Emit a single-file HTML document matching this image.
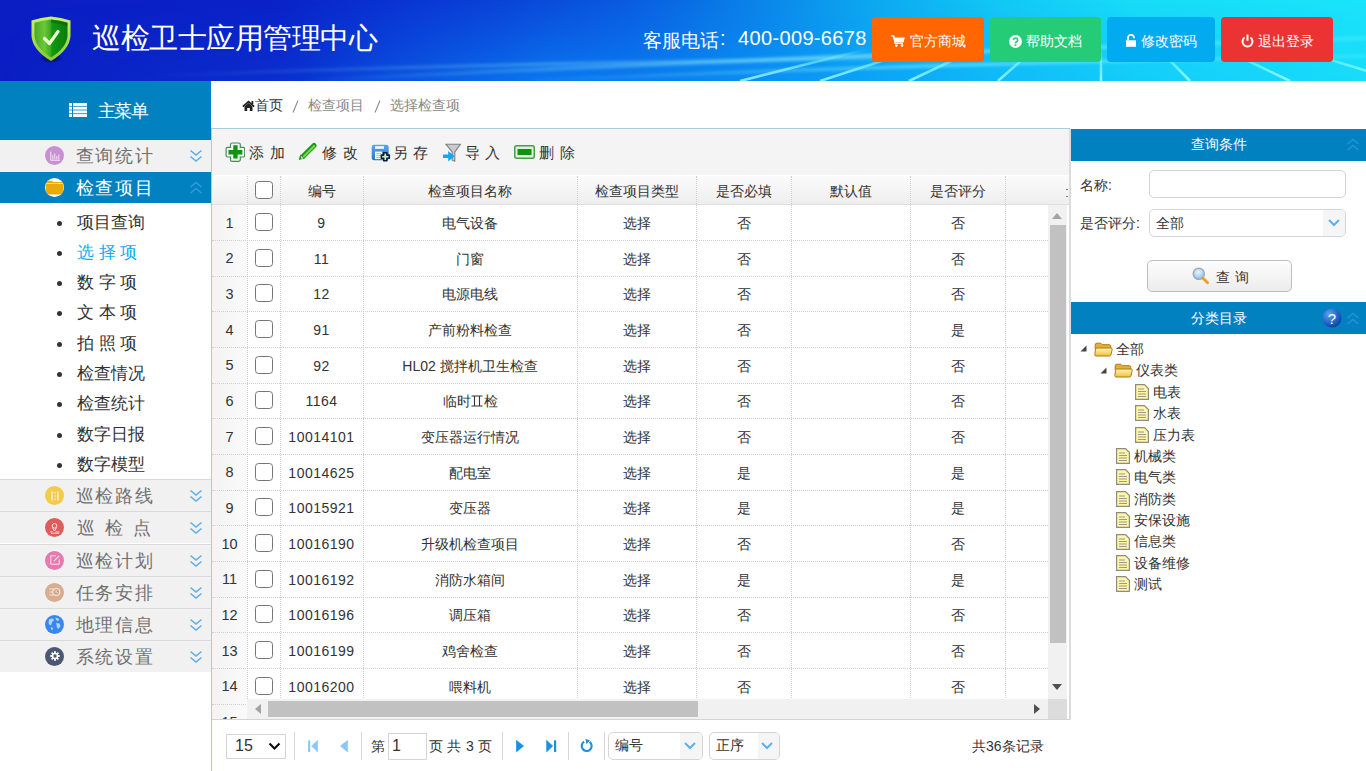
<!DOCTYPE html>
<html><head><meta charset="utf-8">
<style>
*{box-sizing:border-box;margin:0;padding:0}
html,body{width:1366px;height:771px;overflow:hidden;background:#fff;font-family:"Liberation Sans",sans-serif;color:#333}
.a{position:absolute}
.hdr{left:0;top:0;width:1366px;height:81px;background:linear-gradient(90deg,#0b1ec4 0%,#0a22c8 20%,#0a32d2 28%,#0a44d8 37%,#0a5ce0 46%,#0a7ee8 54%,#0ca6f0 63%,#12c8f5 73%,#17dcf8 83%,#1ae4fa 100%);overflow:hidden}
.title{left:92px;top:18.5px;font-size:29px;letter-spacing:-0.5px;color:#fff;white-space:nowrap}
.phone{left:642px;top:27px;font-size:20px;color:#fff;white-space:nowrap}
.btn{top:17px;height:45px;border-radius:4px;color:#fff;font-size:14px;line-height:48px;text-align:center;white-space:nowrap}
.side{left:0;top:81px;width:211px;height:690px;background:#fff}
.mtop{left:0;top:81px;width:211px;height:59px;background:#0281c1;color:#fff;font-size:18px}
.grp{left:0;width:211px;height:32px;background:#f1f1f1;font-size:18px;letter-spacing:1.6px;color:#707070}
.grp .t{position:absolute;left:75.8px;top:4px;white-space:nowrap}
.grp .ic{position:absolute;left:45px;top:6px;width:19px;height:19px;border-radius:50%}
.grp .chev{position:absolute;left:189px;top:9px}
.sub{left:0;width:211px;height:30px;font-size:16.5px;color:#333}
.sub .t{position:absolute;left:77.3px;top:6px;white-space:nowrap}
.sub .dot{position:absolute;left:57px;top:15px;width:5px;height:5px;border-radius:50%;background:#333}
.crumb{left:211px;top:81px;width:1155px;height:47px;background:#fff;font-size:14px}
.grid{left:211px;top:128px;width:859px;height:592px;border:1px solid #a9cde0;background:#fff;overflow:hidden}
.tb{left:212px;top:129px;width:857px;height:47px;background:#f4f4f4;border-bottom:1px solid #e2e2e2}
.tbi{top:0;height:46px;line-height:48px;font-size:15px;color:#333;white-space:nowrap;letter-spacing:5.5px}
.gh{top:176px;height:28.5px;background:linear-gradient(#fbfbfb,#eeeeee);border-bottom:1px solid #e0e0e0}
.cell{position:absolute;text-align:center;font-size:14px;white-space:nowrap;overflow:hidden}
.vl{position:absolute;width:0;border-left:1px dotted #cfcfcf}
.hl{position:absolute;height:0;border-top:1px dotted #cfcfcf}
.cb{position:absolute;width:18px;height:18px;border:1.8px solid #767676;border-radius:3.5px;background:#fff}
.rp{left:1071px;top:129px;width:295px;height:642px;background:#fff}
.ph{left:1071px;width:295px;height:31.5px;background:#0281c1;color:#fff;font-size:14px;text-align:center;line-height:31px}
.inp{position:absolute;border:1px solid #d5d5d5;border-radius:5px;background:#fff}
.tree{font-size:14px;color:#333;white-space:nowrap}
.pg{font-size:14px;color:#333;white-space:nowrap}
.sep{position:absolute;top:732px;width:1px;height:28px;background:#d6d6d6}
</style></head><body>

<div class="a hdr">
<svg class="a" style="left:0;top:0" width="1366" height="81" viewBox="0 0 1366 81">
<defs>
<linearGradient id="gl" x1="0" y1="0" x2="1" y2="0"><stop offset="0" stop-color="#9ff" stop-opacity="0"/><stop offset="0.5" stop-color="#aff" stop-opacity="0.5"/><stop offset="1" stop-color="#9ff" stop-opacity="0.2"/></linearGradient>
<linearGradient id="gv" x1="0" y1="0" x2="0" y2="1"><stop offset="0" stop-color="#0a8cff" stop-opacity="0"/><stop offset="1" stop-color="#0a9cff" stop-opacity="0.55"/></linearGradient>
<linearGradient id="gb" x1="0" y1="0" x2="1" y2="0"><stop offset="0" stop-color="#fff" stop-opacity="0"/><stop offset="0.22" stop-color="#fff" stop-opacity="0.2"/><stop offset="0.4" stop-color="#fff" stop-opacity="1"/><stop offset="0.7" stop-color="#fff" stop-opacity="0.6"/><stop offset="1" stop-color="#fff" stop-opacity="0.2"/></linearGradient>
<mask id="mk"><rect x="0" y="0" width="1366" height="81" fill="url(#gb)"/></mask>
<filter id="bl" x="-5%" y="-50%" width="110%" height="200%"><feGaussianBlur stdDeviation="1.5"/></filter>
</defs>
<rect x="0" y="0" width="1366" height="81" fill="url(#gv)" mask="url(#mk)"/>
<g filter="url(#bl)">
<path d="M300 81 Q700 60 1366 38" stroke="url(#gl)" stroke-width="4" fill="none"/>
<path d="M520 81 Q900 64 1366 56" stroke="url(#gl)" stroke-width="3" fill="none"/>
<path d="M150 76 Q500 62 950 58" stroke="url(#gl)" stroke-width="3" fill="none" opacity="0.6"/>
</g>
<linearGradient id="lg2" x1="0" y1="48" x2="0" y2="81" gradientUnits="userSpaceOnUse"><stop offset="0" stop-color="#7ff" stop-opacity="0"/><stop offset="0.5" stop-color="#8ff" stop-opacity="0.6"/><stop offset="1" stop-color="#aff" stop-opacity="0.8"/></linearGradient><g stroke="url(#lg2)" stroke-width="2.6"><line x1="870.9" y1="48" x2="740" y2="81"/><line x1="921.9" y1="48" x2="820" y2="81"/><line x1="978.6" y1="48" x2="909" y2="81"/><line x1="1035.4" y1="48" x2="998" y2="81"/><line x1="1101.0" y1="48" x2="1101" y2="81"/><line x1="1157.7" y1="48" x2="1190" y2="81"/><line x1="1221.5" y1="48" x2="1290" y2="81"/><line x1="1291.6" y1="48" x2="1400" y2="81"/><line x1="1368.1" y1="48" x2="1520" y2="81"/></g>
</svg>
<svg class="a" style="left:29px;top:14px" width="44" height="50" viewBox="0 0 44 50">
<defs>
<linearGradient id="rim" x1="0" y1="0" x2="0" y2="1"><stop offset="0" stop-color="#c8f070"/><stop offset="1" stop-color="#8ccc30"/></linearGradient>
<linearGradient id="shl" x1="0" y1="0" x2="1" y2="0"><stop offset="0" stop-color="#4aa82a"/><stop offset="0.3" stop-color="#6cc838"/><stop offset="0.5" stop-color="#3aa820"/><stop offset="0.52" stop-color="#129a12"/><stop offset="1" stop-color="#0a7a0e"/></linearGradient>
<radialGradient id="shd" cx="0.5" cy="0.5" r="0.5"><stop offset="0.6" stop-color="#000" stop-opacity="0.35"/><stop offset="1" stop-color="#000" stop-opacity="0"/></radialGradient>
</defs>
<ellipse cx="22" cy="44" rx="12" ry="5" fill="url(#shd)"/>
<path d="M22 2.5 Q12 3.5 2.5 6.5 L2.5 22 Q3.5 36 22 47 Q40.5 36 41.5 22 L41.5 6.5 Q32 3.5 22 2.5Z" fill="url(#rim)"/>
<path d="M22 5.5 Q13 6.5 5.5 8.8 L5.5 22 Q6.5 34 22 43.5 Q37.5 34 38.5 22 L38.5 8.8 Q31 6.5 22 5.5Z" fill="url(#shl)"/>
<path d="M22 5.5 Q31 6.5 38.5 8.8 L38.5 12 Q30 9 22 8.5Z" fill="#0a5a0a" fill-opacity="0.5"/>
<path d="M15.5 24.5 L20.5 29.5 L29 17.5" stroke="#eaffd0" stroke-width="3.2" fill="none" stroke-linecap="round" stroke-linejoin="round"/>
</svg>
<div class="a title">巡检卫士应用管理中心</div>
<div class="a phone" style="font-size:19px;left:642.5px;top:28px">客服电话</div><div class="a phone" style="left:720px;top:27px">:</div><div class="a phone" style="left:738px;top:27px;letter-spacing:0.35px">400-009-6678</div>
<div class="a btn" style="left:872px;width:112px;background:#ff6600"><svg width="14" height="12" viewBox="0 0 14 12" style="vertical-align:-1px;margin-right:5px"><path d="M0.3 1 H2.6 L4.3 8.2 H12" fill="none" stroke="#fff" stroke-width="1.6"/><path d="M3.2 2.6 H13.8 L12.6 7.3 H4.3Z" fill="#fff"/><circle cx="5.3" cy="10.6" r="1.3" fill="#fff"/><circle cx="11" cy="10.6" r="1.3" fill="#fff"/></svg>官方商城</div>
<div class="a btn" style="left:990px;width:111px;background:#25cc78"><svg width="13" height="13" viewBox="0 0 13 13" style="vertical-align:-1.5px;margin-right:4px"><circle cx="6.5" cy="6.5" r="6.5" fill="#fff"/><path d="M4.4 5.1a2.1 2.1 0 1 1 3 1.9c-.7.35-.9.7-.9 1.3v.3" fill="none" stroke="#26cc78" stroke-width="1.7"/><rect x="5.6" y="9.3" width="1.8" height="1.7" fill="#26cc78"/></svg>帮助文档</div>
<div class="a btn" style="left:1107px;width:108px;background:#02aaf0"><svg width="10" height="13" viewBox="0 0 10 13" style="vertical-align:-1px;margin-right:5px"><path d="M2 6.5 V3.8 A3 3 0 0 1 8 3.8 V4.2" fill="none" stroke="#fff" stroke-width="1.7"/><rect x="0" y="6.3" width="10" height="6.5" fill="#fff"/></svg>修改密码</div>
<div class="a btn" style="left:1221px;width:112px;background:#ec3333"><svg width="13" height="14" viewBox="0 0 13 14" style="vertical-align:-1.5px;margin-right:4px"><path d="M3.6 3.5 A5 5 0 1 0 9.4 3.5" fill="none" stroke="#fff" stroke-width="2"/><line x1="6.5" y1="0.5" x2="6.5" y2="6.8" stroke="#fff" stroke-width="2"/></svg>退出登录</div>
</div>
<div class="a side"></div>
<div class="a mtop"><svg class="a" style="left:69px;top:22px" width="18" height="14" viewBox="0 0 18 14"><g fill="#fff"><rect x="0" y="0" width="3" height="2.9"/><rect x="4" y="0" width="14" height="2.9"/><rect x="0" y="3.7" width="3" height="2.9"/><rect x="4" y="3.7" width="14" height="2.9"/><rect x="0" y="7.4" width="3" height="2.9"/><rect x="4" y="7.4" width="14" height="2.9"/><rect x="0" y="11.1" width="3" height="2.9"/><rect x="4" y="11.1" width="14" height="2.9"/></g></svg><div class="a" style="left:97.5px;top:18px;font-size:18px;letter-spacing:-1.5px;white-space:nowrap">主菜单</div></div>
<div class="a grp" style="top:140px;height:31.5px"><div class="ic" style="background:#c98fd3"><svg class="a" style="left:4.5px;top:4.5px;opacity:0.85" width="10" height="10" viewBox="0 0 10 10"><path d="M0.8 0.5v8.8h9M2.8 8.5V4M4.8 8.5V2.5M6.8 8.5V5M8.8 8.5V3.5" fill="none" stroke="#fff" stroke-width="0.9"/></svg></div><div class="t">查询统计</div><svg class="chev" width="14" height="14" viewBox="0 0 14 14"><path d="M1.5 1.5 L7 6 L12.5 1.5 M1.5 7.5 L7 12 L12.5 7.5" fill="none" stroke="#5aaee9" stroke-width="1.5"/></svg></div>
<div class="a grp" style="top:171.5px;height:31.5px;background:#0281c1;color:#fff"><div class="ic" style="background:#fff;overflow:hidden"><svg class="a" style="left:0;top:0" width="19" height="19" viewBox="0 0 19 19"><path d="M1 4 Q1 2.8 2.5 2.8 L7 2.8 L8.2 4 L17.5 4 Q18.5 4 18.5 5 L18.5 16.5 L1 16.5Z" fill="#eaaa0c"/><rect x="1.5" y="5" width="16.5" height="1" fill="#fff" fill-opacity="0.6"/></svg></div><div class="t">检查项目</div><svg class="chev" width="14" height="14" viewBox="0 0 14 14"><path d="M1.5 6 L7 1.5 L12.5 6 M1.5 12 L7 7.5 L12.5 12" fill="none" stroke="#2f9ce0" stroke-width="1.5"/></svg></div>
<div class="a sub" style="top:205.60px;color:#333"><div class="dot"></div><div class="t">项目查询</div></div>
<div class="a sub" style="top:235.88px;color:#12abee"><div class="dot"></div><div class="t">选 择 项</div></div>
<div class="a sub" style="top:266.16px;color:#333"><div class="dot"></div><div class="t">数 字 项</div></div>
<div class="a sub" style="top:296.44px;color:#333"><div class="dot"></div><div class="t">文 本 项</div></div>
<div class="a sub" style="top:326.72px;color:#333"><div class="dot"></div><div class="t">拍 照 项</div></div>
<div class="a sub" style="top:357.00px;color:#333"><div class="dot"></div><div class="t">检查情况</div></div>
<div class="a sub" style="top:387.28px;color:#333"><div class="dot"></div><div class="t">检查统计</div></div>
<div class="a sub" style="top:417.56px;color:#333"><div class="dot"></div><div class="t">数字日报</div></div>
<div class="a sub" style="top:447.84px;color:#333"><div class="dot"></div><div class="t">数字模型</div></div>
<div class="a grp" style="top:479.40px;border-top:1px solid #d9d9d9"><div class="ic" style="background:#f5c94a"><svg class="a" style="left:5.5px;top:4.5px;opacity:0.85" width="8" height="10" viewBox="0 0 8 10"><path d="M1 0.5v9M7 0.5v9" stroke="#fff" stroke-width="1.3"/><path d="M4 1v1.4M4 4.3v1.4M4 7.6v1.4" stroke="#fff" stroke-width="1.2"/></svg></div><div class="t">巡检路线</div><svg class="chev" width="14" height="14" viewBox="0 0 14 14"><path d="M1.5 1.5 L7 6 L12.5 1.5 M1.5 7.5 L7 12 L12.5 7.5" fill="none" stroke="#5aaee9" stroke-width="1.5"/></svg></div>
<div class="a grp" style="top:511.45px;border-top:1px solid #d9d9d9"><div class="ic" style="background:#dd5c5c"><svg class="a" style="left:4px;top:3.5px;opacity:0.8" width="11" height="12" viewBox="0 0 11 12"><circle cx="5.5" cy="3.8" r="2.3" fill="none" stroke="#fff" stroke-width="1"/><path d="M5.5 9 L3.4 5.5 M5.5 9 L7.6 5.5" stroke="#fff" stroke-width="1"/><path d="M1 9.8h2.5M6.5 10h4M2 11.2h8" stroke="#fff" stroke-width="0.9"/></svg></div><div class="t" style="letter-spacing:10.1px;left:77px">巡检点</div><svg class="chev" width="14" height="14" viewBox="0 0 14 14"><path d="M1.5 1.5 L7 6 L12.5 1.5 M1.5 7.5 L7 12 L12.5 7.5" fill="none" stroke="#5aaee9" stroke-width="1.5"/></svg></div>
<div class="a grp" style="top:543.50px;border-top:1px solid #d9d9d9"><div class="ic" style="background:#e878b0"><svg class="a" style="left:4.5px;top:4.5px;opacity:0.8" width="10" height="10" viewBox="0 0 10 10"><path d="M6 0.8H0.8v8.4h8.4V4.5" fill="none" stroke="#fff" stroke-width="1"/><path d="M3.8 6.2 L9.2 0.8" stroke="#fff" stroke-width="1.1"/></svg></div><div class="t">巡检计划</div><svg class="chev" width="14" height="14" viewBox="0 0 14 14"><path d="M1.5 1.5 L7 6 L12.5 1.5 M1.5 7.5 L7 12 L12.5 7.5" fill="none" stroke="#5aaee9" stroke-width="1.5"/></svg></div>
<div class="a grp" style="top:575.55px;border-top:1px solid #d9d9d9"><div class="ic" style="background:#d7ad8e"><svg class="a" style="left:3.5px;top:4.5px;opacity:0.8" width="12" height="10" viewBox="0 0 12 10"><circle cx="7.3" cy="5" r="3.7" fill="none" stroke="#fff" stroke-width="1"/><path d="M7.3 3V5h1.6M0.5 2h4M0.5 5h3M0.5 8h4" stroke="#fff" stroke-width="0.9"/></svg></div><div class="t">任务安排</div><svg class="chev" width="14" height="14" viewBox="0 0 14 14"><path d="M1.5 1.5 L7 6 L12.5 1.5 M1.5 7.5 L7 12 L12.5 7.5" fill="none" stroke="#5aaee9" stroke-width="1.5"/></svg></div>
<div class="a grp" style="top:607.60px;border-top:1px solid #d9d9d9"><div class="ic" style="background:#3a86f0"><svg class="a" style="left:0;top:0" width="19" height="19" viewBox="0 0 19 19"><path d="M4 4.5 Q6 3 8 3.5 L9 5.5 L7 7 L6.5 9.5 L5 10.5 L3.5 8 Z M10.5 2.5 Q13 3 14.5 4.5 L13 6 L11 5Z M11 8 L14.5 8.5 L15.5 11 L13.5 14 L12 12.5 L11.5 10Z M6 12 L8 13 L7.5 15.5 L6 14Z" fill="#d8ecff" fill-opacity="0.75"/></svg></div><div class="t">地理信息</div><svg class="chev" width="14" height="14" viewBox="0 0 14 14"><path d="M1.5 1.5 L7 6 L12.5 1.5 M1.5 7.5 L7 12 L12.5 7.5" fill="none" stroke="#5aaee9" stroke-width="1.5"/></svg></div>
<div class="a grp" style="top:639.65px;border-top:1px solid #d9d9d9"><div class="ic" style="background:#4a5874"><svg class="a" style="left:4.5px;top:4.5px" width="10" height="10" viewBox="0 0 13 13"><g fill="#fff"><circle cx="6.5" cy="6.5" r="4.3"/><rect x="5.3" y="0.3" width="2.4" height="12.4"/><rect x="0.3" y="5.3" width="12.4" height="2.4"/><rect x="5.3" y="0.3" width="2.4" height="12.4" transform="rotate(45 6.5 6.5)"/><rect x="5.3" y="0.3" width="2.4" height="12.4" transform="rotate(-45 6.5 6.5)"/></g><circle cx="6.5" cy="6.5" r="2.2" fill="#4a5874"/></svg></div><div class="t">系统设置</div><svg class="chev" width="14" height="14" viewBox="0 0 14 14"><path d="M1.5 1.5 L7 6 L12.5 1.5 M1.5 7.5 L7 12 L12.5 7.5" fill="none" stroke="#5aaee9" stroke-width="1.5"/></svg></div>
<div class="a crumb"><svg class="a" style="left:30.5px;top:18.5px" width="13" height="11" viewBox="0 0 13 11"><path d="M6.5 0.5 L12.8 6 L11.5 7.2 L6.5 2.8 L1.5 7.2 L0.2 6Z" fill="#222"/><path d="M2.5 6.5 L6.5 3 L10.5 6.5 L10.5 11 L7.8 11 L7.8 8 L5.2 8 L5.2 11 L2.5 11Z" fill="#222"/><rect x="9.5" y="1" width="1.8" height="3" fill="#222"/></svg><div class="a" style="left:44px;top:15.5px;color:#333">首页</div><svg class="a" style="left:81px;top:19px" width="7" height="13" viewBox="0 0 7 13"><path d="M6 0.5 L1 12.5" stroke="#8a8a8a" stroke-width="1.1"/></svg><div class="a" style="left:96.5px;top:15.5px;color:#888">检查项目</div><svg class="a" style="left:162.5px;top:19px" width="7" height="13" viewBox="0 0 7 13"><path d="M6 0.5 L1 12.5" stroke="#8a8a8a" stroke-width="1.1"/></svg><div class="a" style="left:178.5px;top:15.5px;color:#888">选择检查项</div></div>
<div class="a grid"></div>
<div class="a tb"></div>
<div class="a" style="left:212px;top:175px;width:857px;height:545px;background:#fff"></div>
<svg class="a" style="left:224.5px;top:142px" width="20" height="20" viewBox="0 0 20 20"><path d="M7 1h6.8q1.5 0 1.5 1.5v2.8h2.9q1.5 0 1.5 1.5v6.7q0 1.5-1.5 1.5h-2.9v2.8q0 1.5-1.5 1.5H7q-1.5 0-1.5-1.5v-2.8H2.6q-1.5 0-1.5-1.5V6.8q0-1.5 1.5-1.5h2.9V2.5Q5.5 1 7 1z" fill="#eaf6ea" stroke="#4a8a5a" stroke-width="1.2"/><path d="M8.3 3.3h4.3v4.7h4.7v4.4h-4.7v4.0H8.3v-4.0H3.5V8h4.8z" fill="#0e940e"/></svg>
<div class="a tbi" style="left:249px;top:129px">添加</div>
<svg class="a" style="left:297px;top:142px" width="20" height="20" viewBox="0 0 20 20"><path d="M6.2 14.3 L17 3.5" stroke="#1a9a14" stroke-width="5" stroke-linecap="round"/><path d="M6.6 14.6 L17.2 4" stroke="#7ad84a" stroke-width="2" stroke-linecap="round"/><path d="M1.7 18 L3.3 12.4 L7.6 16.6Z" fill="#2a8a20"/><path d="M3.6 13.5 L6.5 16.3 L4.5 17" fill="#d8f0c0"/></svg>
<div class="a tbi" style="left:322px;top:129px">修改</div>
<svg class="a" style="left:371px;top:144px" width="20" height="18" viewBox="0 0 20 18"><defs><linearGradient id="sv" x1="0" y1="0" x2="0" y2="1"><stop offset="0" stop-color="#5aa8ea"/><stop offset="1" stop-color="#2a78c8"/></linearGradient></defs><rect x="0.7" y="0.7" width="17" height="15.5" rx="2.5" fill="url(#sv)"/><rect x="4" y="2.2" width="9" height="2.6" fill="#f4faff"/><rect x="4" y="7.6" width="7" height="7.5" fill="#fafcff"/><path d="M5 9.5h5M5 11.5h5M5 13.5h4" stroke="#8ab8e8" stroke-width="0.8"/><path d="M12.7 8.7h3.2v2.4h2.4v3.2h-2.4v2.4h-3.2v-2.4h-2.4v-3.2h2.4z" fill="#c8ecc8" stroke="#0c1c3c" stroke-width="1.6" stroke-linejoin="round"/></svg>
<div class="a tbi" style="left:392.5px;top:129px">另存</div>
<svg class="a" style="left:442px;top:143px" width="20" height="20" viewBox="0 0 20 20"><path d="M3.8 1.2 H18.6 L12.8 8.8 V18.3 L10.2 17.3 V8.8 Z" fill="#c9c9d6" stroke="#808080" stroke-width="1.1" stroke-linejoin="round"/><path d="M1 11.4 H6.2 V8 L12.6 13.2 L6.2 18.5 V15.1 H1Z" fill="#14a8f0"/></svg>
<div class="a tbi" style="left:464.5px;top:129px">导入</div>
<svg class="a" style="left:514px;top:145px" width="21" height="14" viewBox="0 0 21 14"><rect x="0.75" y="0.75" width="19.5" height="12.5" rx="2" fill="#dff0df" stroke="#4a9a4a" stroke-width="1.5"/><rect x="3.5" y="4" width="14" height="6" fill="#109410"/></svg>
<div class="a tbi" style="left:539px;top:129px">删除</div>

<div class="a gh" style="left:212px;width:857px"></div>
<div class="cell" style="left:280px;width:83px;top:182.5px">编号</div>
<div class="cell" style="left:363px;width:214px;top:182.5px">检查项目名称</div>
<div class="cell" style="left:577px;width:119px;top:182.5px">检查项目类型</div>
<div class="cell" style="left:696px;width:95px;top:182.5px">是否必填</div>
<div class="cell" style="left:791px;width:119px;top:182.5px">默认值</div>
<div class="cell" style="left:910px;width:95px;top:182.5px">是否评分</div>
<div class="cb" style="left:255px;top:181px"></div>
<div class="a" style="left:212px;top:205px;width:35px;height:514px;background:linear-gradient(90deg,#f3f3f3,#fafafa)"></div>
<div class="cell" style="left:212px;width:35px;top:214.60px;font-size:14.5px">1</div>
<div class="cb" style="left:255px;top:213.00px"></div>
<div class="cell" style="left:280px;width:83px;top:214.90px;font-size:14px;letter-spacing:0.5px">9</div>
<div class="cell" style="left:363px;width:214px;top:214.90px;font-size:14px">电气设备</div>
<div class="cell" style="left:577px;width:119px;top:214.90px;font-size:14px">选择</div>
<div class="cell" style="left:696px;width:95px;top:214.90px;font-size:14px">否</div>
<div class="cell" style="left:910px;width:95px;top:214.90px;font-size:14px">否</div>
<div class="hl" style="left:212px;width:836px;top:239.97px"></div>
<div class="cell" style="left:212px;width:35px;top:250.27px;font-size:14.5px">2</div>
<div class="cb" style="left:255px;top:248.67px"></div>
<div class="cell" style="left:280px;width:83px;top:250.57px;font-size:14px;letter-spacing:0.5px">11</div>
<div class="cell" style="left:363px;width:214px;top:250.57px;font-size:14px">门窗</div>
<div class="cell" style="left:577px;width:119px;top:250.57px;font-size:14px">选择</div>
<div class="cell" style="left:696px;width:95px;top:250.57px;font-size:14px">否</div>
<div class="cell" style="left:910px;width:95px;top:250.57px;font-size:14px">否</div>
<div class="hl" style="left:212px;width:836px;top:275.64px"></div>
<div class="cell" style="left:212px;width:35px;top:285.94px;font-size:14.5px">3</div>
<div class="cb" style="left:255px;top:284.34px"></div>
<div class="cell" style="left:280px;width:83px;top:286.24px;font-size:14px;letter-spacing:0.5px">12</div>
<div class="cell" style="left:363px;width:214px;top:286.24px;font-size:14px">电源电线</div>
<div class="cell" style="left:577px;width:119px;top:286.24px;font-size:14px">选择</div>
<div class="cell" style="left:696px;width:95px;top:286.24px;font-size:14px">否</div>
<div class="cell" style="left:910px;width:95px;top:286.24px;font-size:14px">否</div>
<div class="hl" style="left:212px;width:836px;top:311.31px"></div>
<div class="cell" style="left:212px;width:35px;top:321.61px;font-size:14.5px">4</div>
<div class="cb" style="left:255px;top:320.01px"></div>
<div class="cell" style="left:280px;width:83px;top:321.91px;font-size:14px;letter-spacing:0.5px">91</div>
<div class="cell" style="left:363px;width:214px;top:321.91px;font-size:14px">产前粉料检查</div>
<div class="cell" style="left:577px;width:119px;top:321.91px;font-size:14px">选择</div>
<div class="cell" style="left:696px;width:95px;top:321.91px;font-size:14px">否</div>
<div class="cell" style="left:910px;width:95px;top:321.91px;font-size:14px">是</div>
<div class="hl" style="left:212px;width:836px;top:346.98px"></div>
<div class="cell" style="left:212px;width:35px;top:357.28px;font-size:14.5px">5</div>
<div class="cb" style="left:255px;top:355.68px"></div>
<div class="cell" style="left:280px;width:83px;top:357.58px;font-size:14px;letter-spacing:0.5px">92</div>
<div class="cell" style="left:363px;width:214px;top:357.58px;font-size:14px">HL02 搅拌机卫生检查</div>
<div class="cell" style="left:577px;width:119px;top:357.58px;font-size:14px">选择</div>
<div class="cell" style="left:696px;width:95px;top:357.58px;font-size:14px">否</div>
<div class="cell" style="left:910px;width:95px;top:357.58px;font-size:14px">否</div>
<div class="hl" style="left:212px;width:836px;top:382.65px"></div>
<div class="cell" style="left:212px;width:35px;top:392.95px;font-size:14.5px">6</div>
<div class="cb" style="left:255px;top:391.35px"></div>
<div class="cell" style="left:280px;width:83px;top:393.25px;font-size:14px;letter-spacing:0.5px">1164</div>
<div class="cell" style="left:363px;width:214px;top:393.25px;font-size:14px">临时<svg width="12" height="12" viewBox="0 0 12 12" style="vertical-align:-1px;margin:0 0.5px"><path d="M0.5 1h11M0.5 11h11M3.5 1v10M8.5 1v10" stroke="#333" stroke-width="1.1" fill="none"/></svg>检</div>
<div class="cell" style="left:577px;width:119px;top:393.25px;font-size:14px">选择</div>
<div class="cell" style="left:696px;width:95px;top:393.25px;font-size:14px">否</div>
<div class="cell" style="left:910px;width:95px;top:393.25px;font-size:14px">否</div>
<div class="hl" style="left:212px;width:836px;top:418.32px"></div>
<div class="cell" style="left:212px;width:35px;top:428.62px;font-size:14.5px">7</div>
<div class="cb" style="left:255px;top:427.02px"></div>
<div class="cell" style="left:280px;width:83px;top:428.92px;font-size:14px;letter-spacing:0.5px">10014101</div>
<div class="cell" style="left:363px;width:214px;top:428.92px;font-size:14px">变压器运行情况</div>
<div class="cell" style="left:577px;width:119px;top:428.92px;font-size:14px">选择</div>
<div class="cell" style="left:696px;width:95px;top:428.92px;font-size:14px">否</div>
<div class="cell" style="left:910px;width:95px;top:428.92px;font-size:14px">否</div>
<div class="hl" style="left:212px;width:836px;top:453.99px"></div>
<div class="cell" style="left:212px;width:35px;top:464.29px;font-size:14.5px">8</div>
<div class="cb" style="left:255px;top:462.69px"></div>
<div class="cell" style="left:280px;width:83px;top:464.59px;font-size:14px;letter-spacing:0.5px">10014625</div>
<div class="cell" style="left:363px;width:214px;top:464.59px;font-size:14px">配电室</div>
<div class="cell" style="left:577px;width:119px;top:464.59px;font-size:14px">选择</div>
<div class="cell" style="left:696px;width:95px;top:464.59px;font-size:14px">是</div>
<div class="cell" style="left:910px;width:95px;top:464.59px;font-size:14px">是</div>
<div class="hl" style="left:212px;width:836px;top:489.66px"></div>
<div class="cell" style="left:212px;width:35px;top:499.96px;font-size:14.5px">9</div>
<div class="cb" style="left:255px;top:498.36px"></div>
<div class="cell" style="left:280px;width:83px;top:500.26px;font-size:14px;letter-spacing:0.5px">10015921</div>
<div class="cell" style="left:363px;width:214px;top:500.26px;font-size:14px">变压器</div>
<div class="cell" style="left:577px;width:119px;top:500.26px;font-size:14px">选择</div>
<div class="cell" style="left:696px;width:95px;top:500.26px;font-size:14px">是</div>
<div class="cell" style="left:910px;width:95px;top:500.26px;font-size:14px">是</div>
<div class="hl" style="left:212px;width:836px;top:525.33px"></div>
<div class="cell" style="left:212px;width:35px;top:535.63px;font-size:14.5px">10</div>
<div class="cb" style="left:255px;top:534.03px"></div>
<div class="cell" style="left:280px;width:83px;top:535.93px;font-size:14px;letter-spacing:0.5px">10016190</div>
<div class="cell" style="left:363px;width:214px;top:535.93px;font-size:14px">升级机检查项目</div>
<div class="cell" style="left:577px;width:119px;top:535.93px;font-size:14px">选择</div>
<div class="cell" style="left:696px;width:95px;top:535.93px;font-size:14px">否</div>
<div class="cell" style="left:910px;width:95px;top:535.93px;font-size:14px">否</div>
<div class="hl" style="left:212px;width:836px;top:561.00px"></div>
<div class="cell" style="left:212px;width:35px;top:571.30px;font-size:14.5px">11</div>
<div class="cb" style="left:255px;top:569.70px"></div>
<div class="cell" style="left:280px;width:83px;top:571.60px;font-size:14px;letter-spacing:0.5px">10016192</div>
<div class="cell" style="left:363px;width:214px;top:571.60px;font-size:14px">消防水箱间</div>
<div class="cell" style="left:577px;width:119px;top:571.60px;font-size:14px">选择</div>
<div class="cell" style="left:696px;width:95px;top:571.60px;font-size:14px">是</div>
<div class="cell" style="left:910px;width:95px;top:571.60px;font-size:14px">是</div>
<div class="hl" style="left:212px;width:836px;top:596.67px"></div>
<div class="cell" style="left:212px;width:35px;top:606.97px;font-size:14.5px">12</div>
<div class="cb" style="left:255px;top:605.37px"></div>
<div class="cell" style="left:280px;width:83px;top:607.27px;font-size:14px;letter-spacing:0.5px">10016196</div>
<div class="cell" style="left:363px;width:214px;top:607.27px;font-size:14px">调压箱</div>
<div class="cell" style="left:577px;width:119px;top:607.27px;font-size:14px">选择</div>
<div class="cell" style="left:696px;width:95px;top:607.27px;font-size:14px">否</div>
<div class="cell" style="left:910px;width:95px;top:607.27px;font-size:14px">否</div>
<div class="hl" style="left:212px;width:836px;top:632.34px"></div>
<div class="cell" style="left:212px;width:35px;top:642.64px;font-size:14.5px">13</div>
<div class="cb" style="left:255px;top:641.04px"></div>
<div class="cell" style="left:280px;width:83px;top:642.94px;font-size:14px;letter-spacing:0.5px">10016199</div>
<div class="cell" style="left:363px;width:214px;top:642.94px;font-size:14px">鸡舍检查</div>
<div class="cell" style="left:577px;width:119px;top:642.94px;font-size:14px">选择</div>
<div class="cell" style="left:696px;width:95px;top:642.94px;font-size:14px">否</div>
<div class="cell" style="left:910px;width:95px;top:642.94px;font-size:14px">否</div>
<div class="hl" style="left:212px;width:836px;top:668.01px"></div>
<div class="cell" style="left:212px;width:35px;top:678.31px;font-size:14.5px">14</div>
<div class="cb" style="left:255px;top:676.71px"></div>
<div class="cell" style="left:280px;width:83px;top:678.61px;font-size:14px;letter-spacing:0.5px">10016200</div>
<div class="cell" style="left:363px;width:214px;top:678.61px;font-size:14px">喂料机</div>
<div class="cell" style="left:577px;width:119px;top:678.61px;font-size:14px">选择</div>
<div class="cell" style="left:696px;width:95px;top:678.61px;font-size:14px">否</div>
<div class="cell" style="left:910px;width:95px;top:678.61px;font-size:14px">否</div>
<div class="hl" style="left:212px;width:836px;top:703.68px"></div>
<div class="a" style="left:212px;top:703.68px;width:35px;height:15px;overflow:hidden"><div class="cell" style="left:0;width:35px;top:10.3px;font-size:14.5px">15</div></div>
<div class="vl" style="left:247px;top:176px;height:543px"></div>
<div class="vl" style="left:280px;top:176px;height:524px"></div>
<div class="vl" style="left:363px;top:176px;height:524px"></div>
<div class="vl" style="left:577px;top:176px;height:524px"></div>
<div class="vl" style="left:696px;top:176px;height:524px"></div>
<div class="vl" style="left:791px;top:176px;height:524px"></div>
<div class="vl" style="left:910px;top:176px;height:524px"></div>
<div class="vl" style="left:1005px;top:176px;height:524px"></div>
<div class="a" style="left:1066px;top:188.5px;width:2px;height:1.5px;background:#8a6a9a"></div><div class="a" style="left:1066px;top:195.5px;width:2px;height:1.5px;background:#c07050"></div>
<div class="a" style="left:1048px;top:205px;width:19px;height:494px;background:#f1f1f1"></div>
<svg class="a" style="left:1052px;top:213px" width="10" height="6" viewBox="0 0 10 6"><path d="M0 6 L5 0 L10 6Z" fill="#a3a3a3"/></svg>
<div class="a" style="left:1049.5px;top:225px;width:16px;height:418px;background:#c1c1c1"></div>
<svg class="a" style="left:1052px;top:684px" width="10" height="6" viewBox="0 0 10 6"><path d="M0 0 L5 6 L10 0Z" fill="#505050"/></svg>
<div class="a" style="left:247px;top:699px;width:801px;height:20px;background:#f1f1f1"></div>
<div class="a" style="left:1048px;top:699px;width:19px;height:20px;background:#dcdcdc"></div>
<svg class="a" style="left:255px;top:704px" width="6" height="10" viewBox="0 0 6 10"><path d="M6 0 L0 5 L6 10Z" fill="#a3a3a3"/></svg>
<div class="a" style="left:268px;top:701px;width:430px;height:15.5px;background:#c1c1c1"></div>
<svg class="a" style="left:1034px;top:704px" width="6" height="10" viewBox="0 0 6 10"><path d="M0 0 L6 5 L0 10Z" fill="#505050"/></svg>
<div class="a" style="left:212px;top:719px;width:857px;height:1px;background:#d4d4d4"></div>
<div class="a" style="left:212px;top:720px;width:857px;height:51px;background:#fff"></div><div class="a" style="left:211px;top:720px;width:1px;height:51px;background:#a9cde0"></div>
<div class="a" style="left:226px;top:734px;width:60px;height:25px;border:1px solid #d5d5d5;background:#fff"></div>
<div class="a pg" style="left:235px;top:736.5px;font-size:16px">15</div>
<svg class="a" style="left:268px;top:742px" width="13" height="9" viewBox="0 0 13 9"><path d="M1.5 1.5 L6.5 6.5 L11.5 1.5" fill="none" stroke="#111" stroke-width="2.2"/></svg>
<div class="sep" style="left:294px"></div>
<div class="sep" style="left:360.5px"></div>
<div class="sep" style="left:502px"></div>
<div class="sep" style="left:568px"></div>
<div class="sep" style="left:604px"></div>
<svg class="a" style="left:307px;top:739px" width="12" height="14" viewBox="0 0 12 14"><rect x="1.1" y="1.3" width="2.2" height="11.6" rx="0.5" fill="#8cc8f2"/><path d="M10.6 1.3 L4.6 7.1 L10.6 12.9Z" fill="#8cc8f2" stroke="#8cc8f2" stroke-width="0.6" stroke-linejoin="round"/></svg>
<svg class="a" style="left:340px;top:739px" width="9" height="14" viewBox="0 0 9 14"><path d="M7.6 1.3 L0.4 7.1 L7.6 12.9Z" fill="#8cc8f2" stroke="#8cc8f2" stroke-width="0.6" stroke-linejoin="round"/></svg>
<div class="a pg" style="left:371px;top:738px">第</div>
<div class="a" style="left:388px;top:733px;width:39px;height:27px;border:1px solid #d5d5d5;background:#fff"></div>
<div class="a pg" style="left:392px;top:737px;font-size:16px">1</div>
<div class="a pg" style="left:429px;top:738px;letter-spacing:0.3px">页 共 3 页</div>
<svg class="a" style="left:516px;top:739px" width="9" height="14" viewBox="0 0 9 14"><path d="M0.4 1.3 L7.6 7.1 L0.4 12.9Z" fill="#1b8fe0" stroke="#1b8fe0" stroke-width="0.6" stroke-linejoin="round"/></svg>
<svg class="a" style="left:546px;top:739px" width="12" height="14" viewBox="0 0 12 14"><path d="M0.6 1.3 L6.8 7.1 L0.6 12.9Z" fill="#1b8fe0" stroke="#1b8fe0" stroke-width="0.6" stroke-linejoin="round"/><rect x="8" y="1.3" width="2.2" height="11.6" rx="0.5" fill="#1b8fe0"/></svg>
<svg class="a" style="left:579px;top:738px" width="15" height="15" viewBox="0 0 15 15"><path d="M5.2 3.6 A5 5 0 1 0 10.6 3.9" fill="none" stroke="#1b8fe0" stroke-width="2.1"/><path d="M6.5 0.8 L11 2.6 L7.4 6.2Z" fill="#1b8fe0"/></svg>
<div class="inp" style="left:608px;top:732px;width:95px;height:28px;overflow:hidden"><div class="a" style="right:0;top:0;width:22px;height:26px;background:#f5f5f5"></div><div class="a pg" style="left:6px;top:4px">编号</div><svg class="a" style="right:6px;top:9px" width="12" height="8" viewBox="0 0 12 8"><path d="M1 1 L6 6 L11 1" fill="none" stroke="#5ab0f0" stroke-width="2"/></svg></div>
<div class="inp" style="left:709px;top:732px;width:71px;height:28px;overflow:hidden"><div class="a" style="right:0;top:0;width:21px;height:26px;background:#f5f5f5"></div><div class="a pg" style="left:6px;top:4px">正序</div><svg class="a" style="right:6px;top:9px" width="12" height="8" viewBox="0 0 12 8"><path d="M1 1 L6 6 L11 1" fill="none" stroke="#5ab0f0" stroke-width="2"/></svg></div>
<div class="a pg" style="left:972px;top:738px">共36条记录</div>
<div class="a" style="left:1070px;top:128px;width:1px;height:643px;background:#fff"></div>
<div class="a" style="left:1069px;top:129px;width:1.5px;height:591px;background:#dcdcdc"></div>
<div class="a rp"></div>
<div class="a ph" style="top:129px">查询条件<svg class="a" style="left:275px;top:9px" width="14" height="14" viewBox="0 0 14 14"><path d="M1.5 6 L7 1.5 L12.5 6 M1.5 12 L7 7.5 L12.5 12" fill="none" stroke="#2592dc" stroke-width="1.5"/></svg></div>
<div class="a" style="left:1080px;top:176.5px;font-size:14px;white-space:nowrap">名称:</div>
<div class="inp" style="left:1149px;top:170px;width:197px;height:28px"></div>
<div class="a" style="left:1080px;top:214.7px;font-size:14px;white-space:nowrap">是否评分:</div>
<div class="inp" style="left:1149px;top:208.5px;width:197px;height:28px;overflow:hidden"><div class="a" style="right:0;top:0;width:22px;height:26px;background:#f5f5f5"></div><div class="a" style="left:6px;top:5px;font-size:14px">全部</div><svg class="a" style="right:5px;top:9px" width="12" height="8" viewBox="0 0 12 8"><path d="M1 1 L6 6 L11 1" fill="none" stroke="#5ab0f0" stroke-width="2"/></svg></div>
<div class="a" style="left:1147px;top:259.5px;width:145px;height:32px;border:1px solid #bdbdbd;border-radius:5px;background:linear-gradient(#fdfdfd,#ececec)"></div>
<svg class="a" style="left:1192px;top:266.5px" width="18" height="18" viewBox="0 0 18 18"><defs><radialGradient id="lens" cx="0.45" cy="0.35" r="0.6"><stop offset="0" stop-color="#e8f4ff"/><stop offset="1" stop-color="#8cc4f4"/></radialGradient></defs><circle cx="6.8" cy="6.8" r="5.6" fill="url(#lens)" stroke="#a8a8a8" stroke-width="1.4"/><path d="M10.8 11 L15.6 15.8" stroke="#e8a020" stroke-width="2.8" stroke-linecap="round"/></svg>
<div class="a" style="left:1215.5px;top:268.5px;font-size:14px;letter-spacing:5px;white-space:nowrap">查询</div>
<div class="a ph" style="top:302px;height:32px;line-height:32px">分类目录<svg class="a" style="left:251px;top:6px" width="20" height="20" viewBox="0 0 20 20"><defs><radialGradient id="hq" cx="0.35" cy="0.3" r="0.8"><stop offset="0" stop-color="#5aa4f0"/><stop offset="0.7" stop-color="#1a58c0"/><stop offset="1" stop-color="#0c3a90"/></radialGradient></defs><circle cx="10" cy="10" r="9.5" fill="url(#hq)"/><text x="10" y="15.5" font-size="15" font-family="Liberation Sans" fill="#fff" text-anchor="middle">?</text></svg><svg class="a" style="left:275px;top:10px" width="14" height="14" viewBox="0 0 14 14"><path d="M1.5 6 L7 1.5 L12.5 6 M1.5 12 L7 7.5 L12.5 12" fill="none" stroke="#2592dc" stroke-width="1.5"/></svg></div>
<svg class="a" style="left:1080.0px;top:345.30px" width="8" height="8" viewBox="0 0 8 8"><path d="M6.5 0.5 L6.5 6.5 L0.5 6.5Z" fill="#444"/></svg>
<svg class="a" style="left:1094.0px;top:341.80px" width="19" height="15" viewBox="0 0 19 15"><defs><linearGradient id="fg" x1="0" y1="0" x2="0" y2="1"><stop offset="0" stop-color="#fff6b8"/><stop offset="1" stop-color="#eec040"/></linearGradient></defs><path d="M1.2 3 Q1.2 1.2 3 1.2 H6.8 L8.3 2.7 H15.2 Q16.8 2.7 16.8 4.3 V7 H1.2Z" fill="#e2b03a" stroke="#b07a10" stroke-width="1"/><path d="M0.8 12.8 Q0.9 14 2 14 H15.5 Q16.6 14 17 12.9 L18.2 7.3 Q18.3 6 17 6 H3 Q1.9 6 1.6 7.2Z" fill="url(#fg)" stroke="#b07a10" stroke-width="1"/></svg>
<div class="a tree" style="left:1116.0px;top:341.10px">全部</div>
<svg class="a" style="left:1099.5px;top:366.66px" width="8" height="8" viewBox="0 0 8 8"><path d="M6.5 0.5 L6.5 6.5 L0.5 6.5Z" fill="#444"/></svg>
<svg class="a" style="left:1113.5px;top:363.16px" width="19" height="15" viewBox="0 0 19 15"><defs><linearGradient id="fg" x1="0" y1="0" x2="0" y2="1"><stop offset="0" stop-color="#fff6b8"/><stop offset="1" stop-color="#eec040"/></linearGradient></defs><path d="M1.2 3 Q1.2 1.2 3 1.2 H6.8 L8.3 2.7 H15.2 Q16.8 2.7 16.8 4.3 V7 H1.2Z" fill="#e2b03a" stroke="#b07a10" stroke-width="1"/><path d="M0.8 12.8 Q0.9 14 2 14 H15.5 Q16.6 14 17 12.9 L18.2 7.3 Q18.3 6 17 6 H3 Q1.9 6 1.6 7.2Z" fill="url(#fg)" stroke="#b07a10" stroke-width="1"/></svg>
<div class="a tree" style="left:1135.5px;top:362.46px">仪表类</div>
<svg class="a" style="left:1135px;top:384.02px" width="14" height="16" viewBox="0 0 14 16"><path d="M0.6 0.6 L9.5 0.6 L13.4 4.5 L13.4 15.4 L0.6 15.4Z" fill="#fff6a8" stroke="#8c8c80" stroke-width="1.2"/><path d="M3 5h6M3 7.5h8M3 10h8M3 12.5h8" stroke="#9a9a90" stroke-width="1"/></svg>
<div class="a tree" style="left:1153px;top:383.82px">电表</div>
<svg class="a" style="left:1135px;top:405.38px" width="14" height="16" viewBox="0 0 14 16"><path d="M0.6 0.6 L9.5 0.6 L13.4 4.5 L13.4 15.4 L0.6 15.4Z" fill="#fff6a8" stroke="#8c8c80" stroke-width="1.2"/><path d="M3 5h6M3 7.5h8M3 10h8M3 12.5h8" stroke="#9a9a90" stroke-width="1"/></svg>
<div class="a tree" style="left:1153px;top:405.18px">水表</div>
<svg class="a" style="left:1135px;top:426.74px" width="14" height="16" viewBox="0 0 14 16"><path d="M0.6 0.6 L9.5 0.6 L13.4 4.5 L13.4 15.4 L0.6 15.4Z" fill="#fff6a8" stroke="#8c8c80" stroke-width="1.2"/><path d="M3 5h6M3 7.5h8M3 10h8M3 12.5h8" stroke="#9a9a90" stroke-width="1"/></svg>
<div class="a tree" style="left:1153px;top:426.54px">压力表</div>
<svg class="a" style="left:1116px;top:448.10px" width="14" height="16" viewBox="0 0 14 16"><path d="M0.6 0.6 L9.5 0.6 L13.4 4.5 L13.4 15.4 L0.6 15.4Z" fill="#fff6a8" stroke="#8c8c80" stroke-width="1.2"/><path d="M3 5h6M3 7.5h8M3 10h8M3 12.5h8" stroke="#9a9a90" stroke-width="1"/></svg>
<div class="a tree" style="left:1134px;top:447.90px">机械类</div>
<svg class="a" style="left:1116px;top:469.46px" width="14" height="16" viewBox="0 0 14 16"><path d="M0.6 0.6 L9.5 0.6 L13.4 4.5 L13.4 15.4 L0.6 15.4Z" fill="#fff6a8" stroke="#8c8c80" stroke-width="1.2"/><path d="M3 5h6M3 7.5h8M3 10h8M3 12.5h8" stroke="#9a9a90" stroke-width="1"/></svg>
<div class="a tree" style="left:1134px;top:469.26px">电气类</div>
<svg class="a" style="left:1116px;top:490.82px" width="14" height="16" viewBox="0 0 14 16"><path d="M0.6 0.6 L9.5 0.6 L13.4 4.5 L13.4 15.4 L0.6 15.4Z" fill="#fff6a8" stroke="#8c8c80" stroke-width="1.2"/><path d="M3 5h6M3 7.5h8M3 10h8M3 12.5h8" stroke="#9a9a90" stroke-width="1"/></svg>
<div class="a tree" style="left:1134px;top:490.62px">消防类</div>
<svg class="a" style="left:1116px;top:512.18px" width="14" height="16" viewBox="0 0 14 16"><path d="M0.6 0.6 L9.5 0.6 L13.4 4.5 L13.4 15.4 L0.6 15.4Z" fill="#fff6a8" stroke="#8c8c80" stroke-width="1.2"/><path d="M3 5h6M3 7.5h8M3 10h8M3 12.5h8" stroke="#9a9a90" stroke-width="1"/></svg>
<div class="a tree" style="left:1134px;top:511.98px">安保设施</div>
<svg class="a" style="left:1116px;top:533.54px" width="14" height="16" viewBox="0 0 14 16"><path d="M0.6 0.6 L9.5 0.6 L13.4 4.5 L13.4 15.4 L0.6 15.4Z" fill="#fff6a8" stroke="#8c8c80" stroke-width="1.2"/><path d="M3 5h6M3 7.5h8M3 10h8M3 12.5h8" stroke="#9a9a90" stroke-width="1"/></svg>
<div class="a tree" style="left:1134px;top:533.34px">信息类</div>
<svg class="a" style="left:1116px;top:554.90px" width="14" height="16" viewBox="0 0 14 16"><path d="M0.6 0.6 L9.5 0.6 L13.4 4.5 L13.4 15.4 L0.6 15.4Z" fill="#fff6a8" stroke="#8c8c80" stroke-width="1.2"/><path d="M3 5h6M3 7.5h8M3 10h8M3 12.5h8" stroke="#9a9a90" stroke-width="1"/></svg>
<div class="a tree" style="left:1134px;top:554.70px">设备维修</div>
<svg class="a" style="left:1116px;top:576.26px" width="14" height="16" viewBox="0 0 14 16"><path d="M0.6 0.6 L9.5 0.6 L13.4 4.5 L13.4 15.4 L0.6 15.4Z" fill="#fff6a8" stroke="#8c8c80" stroke-width="1.2"/><path d="M3 5h6M3 7.5h8M3 10h8M3 12.5h8" stroke="#9a9a90" stroke-width="1"/></svg>
<div class="a tree" style="left:1134px;top:576.06px">测试</div>
</body></html>
